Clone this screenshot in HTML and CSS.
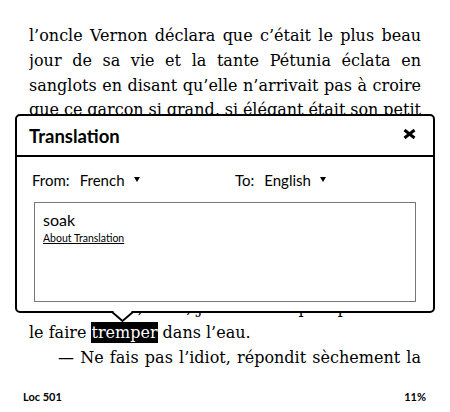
FILE: index.html
```html
<!DOCTYPE html>
<html lang="fr">
<head>
<meta charset="utf-8">
<title>Reader</title>
<link rel="stylesheet" href="styles.css">
</head>
<body>
<div class="page">
  <div class="text">
    <div class="ln j">l’oncle Vernon déclara que c’était le plus beau</div>
    <div class="ln j">jour de sa vie et la tante Pétunia éclata en</div>
    <div class="ln j">sanglots en disant qu’elle n’arrivait pas à croire</div>
    <div class="ln j">que ce garçon si grand, si élégant était son petit</div>
    <div class="ln j">Dudlinouchet chéri. Harry, lui, n’osa rien dire</div>
    <div class="ln j">de peur de se casser une côte à force de</div>
    <div class="ln j">contenir son fou rire. Le lendemain matin,</div>
    <div class="ln j">une odeur épouvantable régnait dans la</div>
    <div class="ln j">cuisine. Elle venait d’une bassine d’eau grise.</div>
    <div class="ln j ind">— Qu’est-ce que c’est ? demanda Harry.</div>
    <div class="ln j ind">— Ton nouvel uniforme, dit la tante.</div>
    <div class="ln j ind">— Ah bon, dit-il, je ne savais pas qu’il fallait</div>
    <div class="ln">le faire <span class="hl">tremper</span> dans l’eau.</div>
    <div class="ln j ind">— Ne fais pas l’idiot, répondit sèchement la</div>
  </div>
  <div class="footer"><span>Loc 501</span><span>11%</span></div>

  <div class="popup">
    <div class="pop-head">
      <span class="pop-title">Translation</span>
      <svg class="close" width="13" height="10" viewBox="0 0 13 10"><path d="M1.5 1 L11.5 9 M11.5 1 L1.5 9" stroke="#000" stroke-width="3" fill="none"/></svg>
    </div>
    <div class="pop-body">
      <div class="langs">
        <div><span class="lbl lbl-from">From:</span>French<svg class="caret" width="6" height="5" viewBox="0 0 6 5"><path d="M0 0 L6 0 L3 5 Z" fill="#000"/></svg></div>
        <div><span class="lbl lbl-to">To:</span>English<svg class="caret" width="6" height="5" viewBox="0 0 6 5"><path d="M0 0 L6 0 L3 5 Z" fill="#000"/></svg></div>
      </div>
      <div class="tbox">
        <div class="word">soak</div>
        <div class="about">About Translation</div>
      </div>
    </div>
    <svg class="arrow" width="21" height="12" viewBox="0 0 21 12"><rect x="1.5" y="0" width="18" height="2.2" fill="#fff"/><polyline points="0,1 10.5,10 21,1" fill="#fff" stroke="#000" stroke-width="2"/></svg>
  </div>
</div>
</body>
</html>
```
FILE: styles.css
```css
html, body {
  margin: 0;
  padding: 0;
  background: #fff;
}

.page {
  position: relative;
  width: 450px;
  height: 412px;
  display: flex;
  flex-direction: column;
  overflow: hidden;
  color: #000;
}

.text {
  padding: 24px 29px 0 29px;
  font-family: "DejaVu Serif", serif;
  font-size: 16px;
  line-height: 24.75px;
}

.ln {
  height: 24.75px;
  overflow: hidden;
  white-space: nowrap;
}

.ln.j {
  text-align: justify;
  text-align-last: justify;
  white-space: normal;
  word-spacing: -2.5px;
}

.ln.ind {
  text-indent: 29px;
}

.hl {
  background: #000;
  color: #fff;
  padding: 1px 0;
}

.footer {
  margin-top: auto;
  display: flex;
  justify-content: space-between;
  padding: 0 24px 9px 23px;
  font-family: Lato, "Open Sans", sans-serif;
  font-weight: 700;
  font-size: 11px;
  line-height: 13px;
}

.popup {
  position: absolute;
  left: 15px;
  top: 114px;
  width: 420px;
  height: 199px;
  box-sizing: border-box;
  border: 2px solid #000;
  border-radius: 5px;
  background: #fff;
  font-family: Lato, "Open Sans", sans-serif;
  color: #000;
}

.pop-head {
  height: 39px;
  border-bottom: 2px solid #000;
  display: flex;
  align-items: center;
  justify-content: space-between;
  padding: 0 17px 0 12px;
}

.pop-title {
  font-weight: 700;
  font-size: 18.5px;
}

.close {
  margin-bottom: 4px;
}

.pop-body {
  padding: 13.5px 17px 9px 17px;
}

.langs {
  display: grid;
  grid-template-columns: 203px auto;
  margin-left: -2px;
  font-size: 15px;
  line-height: 18px;
  height: 18px;
}

.lbl {
  display: inline-block;
}

.lbl-from {
  width: 47.7px;
}

.lbl-to {
  width: 29.3px;
}

.caret {
  margin-left: 9px;
  vertical-align: 3.5px;
}

.tbox {
  margin-top: 13.5px;
  height: 100px;
  box-sizing: border-box;
  border: 1px solid #777;
  padding: 7px 8px;
}

.word {
  font-size: 16px;
  line-height: 19px;
}

.about {
  margin-top: 2.5px;
  font-size: 10.5px;
  line-height: 12px;
  text-decoration: underline;
}

.arrow {
  position: absolute;
  left: 95px;
  top: 195px;
}
```
